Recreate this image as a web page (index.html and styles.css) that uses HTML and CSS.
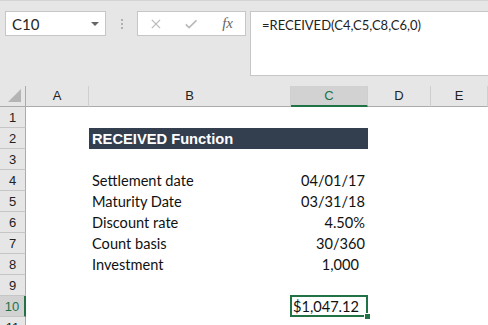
FILE: index.html
```html
<!DOCTYPE html>
<html lang="en">

<head>
    <meta charset="UTF-8">
    <title>RECEIVED Function</title>
    <link rel="stylesheet" href="styles.css">
</head>

<body>
    <div class="topbar">
        <div class="namebox">
            <span>C10</span>
            <span class="caret"></span>
        </div>
        <div class="grip"><i></i><i></i><i></i></div>
        <div class="fbtns">
            <svg width="12" height="12" viewBox="0 0 12 12"><path d="M1 1L11 11M11 1L1 11" stroke="#b9b9b9" stroke-width="1.5" fill="none"/></svg>
            <svg width="15" height="12" viewBox="0 0 15 12"><path d="M1 6.5L5 10.5L14 1.5" stroke="#b9b9b9" stroke-width="2" fill="none"/></svg>
            <span class="fx">fx</span>
        </div>
        <div class="formula">=RECEIVED(C4,C5,C8,C6,0)</div>
    </div>

    <div class="sheet">
        <div class="corner"><span class="tri"></span></div>
        <div class="colhead">A</div>
        <div class="colhead">B</div>
        <div class="colhead active">C</div>
        <div class="colhead">D</div>
        <div class="colhead">E</div>

        <div class="rowhead">1</div>
        <div class="cell"></div><div class="cell"></div><div class="cell"></div><div class="cell"></div><div class="cell"></div>

        <div class="rowhead">2</div>
        <div class="cell"></div>
        <div class="cell title">RECEIVED Function</div>
        <div class="cell"></div><div class="cell"></div>

        <div class="rowhead">3</div>
        <div class="cell"></div><div class="cell"></div><div class="cell"></div><div class="cell"></div><div class="cell"></div>

        <div class="rowhead">4</div>
        <div class="cell"></div>
        <div class="cell label">Settlement date</div>
        <div class="cell num">04/01/17</div>
        <div class="cell"></div><div class="cell"></div>

        <div class="rowhead">5</div>
        <div class="cell"></div>
        <div class="cell label">Maturity Date</div>
        <div class="cell num">03/31/18</div>
        <div class="cell"></div><div class="cell"></div>

        <div class="rowhead">6</div>
        <div class="cell"></div>
        <div class="cell label">Discount rate</div>
        <div class="cell num">4.50%</div>
        <div class="cell"></div><div class="cell"></div>

        <div class="rowhead">7</div>
        <div class="cell"></div>
        <div class="cell label">Count basis</div>
        <div class="cell num">30/360</div>
        <div class="cell"></div><div class="cell"></div>

        <div class="rowhead">8</div>
        <div class="cell"></div>
        <div class="cell label">Investment</div>
        <div class="cell num acct">1,000</div>
        <div class="cell"></div><div class="cell"></div>

        <div class="rowhead">9</div>
        <div class="cell"></div><div class="cell"></div><div class="cell"></div><div class="cell"></div><div class="cell"></div>

        <div class="rowhead active">10</div>
        <div class="cell"></div>
        <div class="cell"></div>
        <div class="cell num acct selected">$1,047.12</div>
        <div class="cell"></div><div class="cell"></div>

        <div class="rowhead">11</div>
        <div class="cell"></div><div class="cell"></div><div class="cell"></div><div class="cell"></div><div class="cell"></div>
    </div>
</body>

</html>
```

FILE: styles.css
```css
body {
    margin: 0;
    background: #e6e6e6;
    font-family: "Liberation Sans", Arial, sans-serif;
    color: #222;
    overflow: hidden;
}

/* formula bar */
.topbar {
    display: flex;
    align-items: flex-start;
    height: 65px;
    padding: 10px 0 10px;
    border-top: 1px solid #d4d4d4;
}

.namebox {
    display: flex;
    align-items: center;
    justify-content: space-between;
    box-sizing: border-box;
    width: 101px;
    height: 25px;
    margin-left: 5px;
    padding: 0 6px 0 6px;
    background: #fff;
    border: 1px solid #c6c6c6;
    font-family: "Lato", "Liberation Sans", sans-serif;
    font-size: 15px;
    color: #262626;
}

.caret {
    width: 0;
    height: 0;
    border-left: 4px solid transparent;
    border-right: 4px solid transparent;
    border-top: 4px solid #666;
}

.grip {
    display: flex;
    flex-direction: column;
    align-items: center;
    gap: 2px;
    width: 31px;
    padding-top: 8px;
}

.grip i {
    width: 2px;
    height: 2px;
    background: #b0b0b0;
}

.fbtns {
    display: flex;
    align-items: center;
    box-sizing: border-box;
    width: 109px;
    height: 25px;
    padding: 0 12px 0 13px;
    gap: 22px;
    background: #fff;
    border: 1px solid #c6c6c6;
}

.fbtns svg:nth-child(2) {
    margin-left: 2px;
}

.fx {
    margin-left: 3px;
    font-family: "Liberation Serif", serif;
    font-style: italic;
    font-size: 15px;
    color: #666;
}

.formula {
    flex: 1;
    box-sizing: border-box;
    height: 65px;
    margin-left: 4px;
    padding: 5px 0 0 11px;
    background: #fff;
    border: 1px solid #c6c6c6;
    border-right: none;
    font-family: "Lato", "Liberation Sans", sans-serif;
    font-size: 13px;
    color: #222;
}

/* grid */
.sheet {
    display: grid;
    grid-template-columns: 26px 63px 202px 77px 63px 1fr;
    grid-auto-rows: 21px;
    background: #fff;
}

.corner,
.colhead {
    box-sizing: border-box;
    background: #e6e6e6;
    border-bottom: 1px solid #ababab;
    border-right: 1px solid #cfcfcf;
}

.corner {
    position: relative;
    border-right-color: #ababab;
}

.tri {
    position: absolute;
    right: 4px;
    bottom: 4px;
    width: 0;
    height: 0;
    border-left: 13px solid transparent;
    border-bottom: 13px solid #b4b4b4;
}

.colhead {
    text-align: center;
    font-size: 13px;
    line-height: 20px;
    color: #222;
}

.colhead.active {
    background: #d2d2d2;
    border-bottom: 2px solid #217346;
    color: #217346;
    line-height: 19px;
}

.rowhead {
    box-sizing: border-box;
    background: #e6e6e6;
    border-bottom: 1px solid #c6c6c6;
    border-right: 1px solid #ababab;
    text-align: center;
    font-size: 13px;
    line-height: 22px;
    color: #222;
}

.rowhead.active {
    background: #d2d2d2;
    border-right: 2px solid #217346;
    color: #217346;
}

.cell {
    font-family: "Lato", "Liberation Sans", sans-serif;
    font-size: 14.6px;
    line-height: 22px;
    color: #111;
    white-space: nowrap;
}

.label {
    padding-left: 3px;
}

.num {
    text-align: right;
    padding-right: 3px;
}

.acct {
    padding-right: 9px;
}

.title {
    grid-column: span 2;
    padding-left: 3px;
    background: #333f4f;
    color: #fff;
    font-family: "Liberation Sans", Arial, sans-serif;
    font-weight: bold;
    font-size: 14.7px;
}

.selected {
    position: relative;
}

.selected::after {
    content: "";
    position: absolute;
    left: -1px;
    top: -1px;
    right: 0;
    bottom: 0;
    border: 2px solid #217346;
}

.selected::before {
    content: "";
    position: absolute;
    right: -3px;
    bottom: -3px;
    width: 5px;
    height: 5px;
    background: #217346;
    border: 1px solid #fff;
    z-index: 1;
}
```
